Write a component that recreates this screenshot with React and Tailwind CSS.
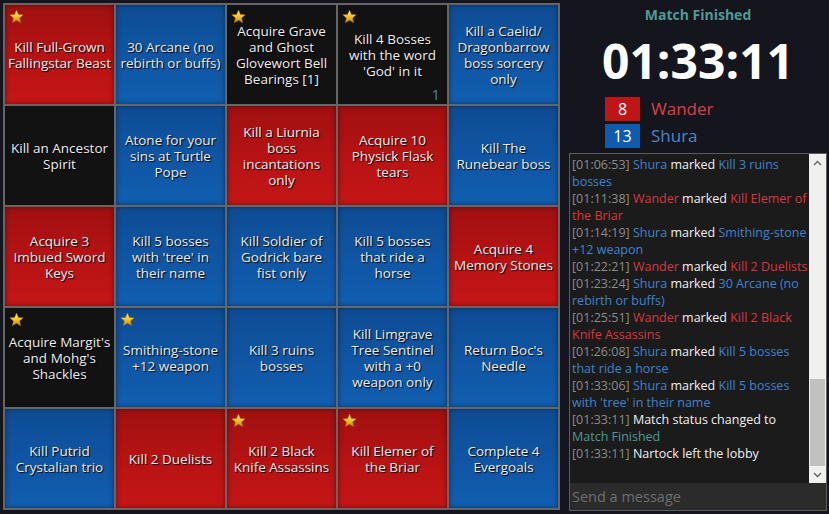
import React from "react";

const cells = [
  { c: "r", s: true, t: ["Kill Full-Grown", "Fallingstar Beast"] },
  { c: "b", t: ["30 Arcane (no", "rebirth or buffs)"] },
  { c: "k", s: true, t: ["Acquire Grave", "and Ghost", "Glovewort Bell", "Bearings [1]"] },
  { c: "k", s: true, t: ["Kill 4 Bosses", "with the word", "'God' in it"], n: "1" },
  { c: "b", t: ["Kill a Caelid/", "Dragonbarrow", "boss sorcery", "only"] },
  { c: "k", t: ["Kill an Ancestor", "Spirit"] },
  { c: "b", t: ["Atone for your", "sins at Turtle", "Pope"] },
  { c: "r", t: ["Kill a Liurnia", "boss", "incantations", "only"] },
  { c: "r", t: ["Acquire 10", "Physick Flask", "tears"] },
  { c: "b", t: ["Kill The", "Runebear boss"] },
  { c: "r", t: ["Acquire 3", "Imbued Sword", "Keys"] },
  { c: "b", t: ["Kill 5 bosses", "with 'tree' in", "their name"] },
  { c: "b", t: ["Kill Soldier of", "Godrick bare", "fist only"] },
  { c: "b", t: ["Kill 5 bosses", "that ride a", "horse"] },
  { c: "r", t: ["Acquire 4", "Memory Stones"] },
  { c: "k", s: true, t: ["Acquire Margit's", "and Mohg's", "Shackles"] },
  { c: "b", s: true, t: ["Smithing-stone", "+12 weapon"] },
  { c: "b", t: ["Kill 3 ruins", "bosses"] },
  { c: "b", t: ["Kill Limgrave", "Tree Sentinel", "with a +0", "weapon only"] },
  { c: "b", t: ["Return Boc's", "Needle"] },
  { c: "b", t: ["Kill Putrid", "Crystalian trio"] },
  { c: "r", t: ["Kill 2 Duelists"] },
  { c: "r", s: true, t: ["Kill 2 Black", "Knife Assassins"] },
  { c: "r", s: true, t: ["Kill Elemer of", "the Briar"] },
  { c: "b", t: ["Complete 4", "Evergoals"] },
];

const BG = {
  r: "bg-[linear-gradient(180deg,#a01010_0%,#b81314_55%,#c41617_100%)] shadow-[inset_0_0_5px_rgba(0,0,0,0.45)]",
  b: "bg-[linear-gradient(180deg,#0e4c94_0%,#1056a4_55%,#115eb0_100%)] shadow-[inset_0_0_5px_rgba(0,0,0,0.45)]",
  k: "bg-[#121212]",
};

function Star() {
  return (
    <svg className="absolute left-[4px] top-[4px]" width="15" height="15" viewBox="0 0 24 24">
      <defs>
        <linearGradient id="sg" x1="0" y1="0" x2="0" y2="1">
          <stop offset="0" stopColor="#fff3a0" />
          <stop offset="0.5" stopColor="#f5c52a" />
          <stop offset="1" stopColor="#d08a00" />
        </linearGradient>
      </defs>
      <polygon
        points="12,1.5 15.1,8.6 22.8,9.3 17,14.4 18.7,22 12,18 5.3,22 7,14.4 1.2,9.3 8.9,8.6"
        fill="url(#sg)"
        stroke="#9a6a00"
        strokeWidth="0.8"
      />
    </svg>
  );
}

function Cell({ d }) {
  return (
    <div className={`relative flex items-center justify-center text-center ${BG[d.c]}`}>
      {d.s && <Star />}
      <div className="text-[13.5px] leading-[16px] text-[#ececec] whitespace-nowrap [text-shadow:1px_1px_1px_#000]">
        {d.t.map((l, i) => (
          <div key={i}>{l}</div>
        ))}
      </div>
      {d.n && (
        <div className="absolute right-[7px] bottom-[1px] text-[15px] leading-[18px] text-[#4a7fc0]">{d.n}</div>
      )}
    </div>
  );
}

const T = "text-[#8c8c8c]";
const W = "text-[#f0f0f0]";
const RD = "text-[#d9373f]";
const BL = "text-[#3f83cc]";
const TL = "text-[#4f9a94]";

const msgs = [
  ["01:06:53", "Shura", "Kill 3 ruins bosses"],
  ["01:11:38", "Wander", "Kill Elemer of the Briar"],
  ["01:14:19", "Shura", "Smithing-stone +12 weapon"],
  ["01:22:21", "Wander", "Kill 2 Duelists"],
  ["01:23:24", "Shura", "30 Arcane (no rebirth or buffs)"],
  ["01:25:51", "Wander", "Kill 2 Black Knife Assassins"],
  ["01:26:08", "Shura", "Kill 5 bosses that ride a horse"],
  ["01:33:06", "Shura", "Kill 5 bosses with 'tree' in their name"],
];

export default function App() {
  return (
    <div className="flex w-[829px] h-[514px] bg-[#15151d] overflow-hidden font-['Open_Sans',sans-serif]">
      <div className="pt-[3px] pl-[3px]">
        <div className="grid grid-cols-[repeat(5,109px)] grid-rows-[repeat(5,99px)] gap-[2px] p-[2px] bg-[#666666]">
          {cells.map((d, i) => (
            <Cell key={i} d={d} />
          ))}
        </div>
      </div>
      <div className="flex flex-col flex-1 pl-[9px] pr-[2px]">
        <div className="text-center text-[14px] leading-[20px] font-bold text-[#4f9a94] pt-[5px]">Match Finished</div>
        <div className="text-center text-[48px] leading-[56px] font-bold text-white mt-[8px]">01:33:11</div>
        <div className="flex flex-col gap-[3px] pl-[36px] mt-[8px]">
          <div className="flex items-center">
            <div className="w-[35px] h-[24px] bg-[#c01517] text-white text-[16px] leading-[24px] text-center">8</div>
            <div className="ml-[11px] text-[17px] leading-[24px] text-[#d9404a]">Wander</div>
          </div>
          <div className="flex items-center">
            <div className="w-[35px] h-[24px] bg-[#0f5cad] text-white text-[16px] leading-[24px] text-center">13</div>
            <div className="ml-[11px] text-[17px] leading-[24px] text-[#4a86c8]">Shura</div>
          </div>
        </div>
        <div className="mt-[5px] h-[358px] border border-[#5c5c5c] bg-[#1b1b1c] flex flex-col">
          <div className="flex flex-1 min-h-0">
            <div className="flex-1 pl-[2px] pt-[2px] text-[12.5px] leading-[17px]">
              {msgs.map((m, i) => (
                <div key={i}>
                  <span className={T}>[{m[0]}]</span>{" "}
                  <span className={m[1] === "Shura" ? BL : RD}>{m[1]}</span>{" "}
                  <span className={W}>marked</span>{" "}
                  <span className={m[1] === "Shura" ? BL : RD}>{m[2]}</span>
                </div>
              ))}
              <div>
                <span className={T}>[01:33:11]</span> <span className={W}>Match status changed to</span>{" "}
                <span className={TL}>Match Finished</span>
              </div>
              <div>
                <span className={T}>[01:33:11]</span> <span className={W}>Nartock left the lobby</span>
              </div>
            </div>
            <div className="w-[17px] bg-[#f0f0f0] flex flex-col items-center">
              <div className="h-[17px] flex items-center justify-center">
                <svg width="9" height="6" viewBox="0 0 9 6">
                  <path d="M1 5 L4.5 1.5 L8 5" fill="none" stroke="#606060" strokeWidth="1.3" />
                </svg>
              </div>
              <div className="flex-1 w-full flex flex-col justify-end">
                <div className="h-[87px] mx-[1px] bg-[#c1c1c1]" />
              </div>
              <div className="h-[17px] flex items-center justify-center">
                <svg width="9" height="6" viewBox="0 0 9 6">
                  <path d="M1 1 L4.5 4.5 L8 1" fill="none" stroke="#606060" strokeWidth="1.3" />
                </svg>
              </div>
            </div>
          </div>
          <div className="h-[27px] bg-[#2b2b2b] pl-[2px] text-[14.5px] leading-[27px] text-[#6f6f6f]">Send a message</div>
        </div>
      </div>
    </div>
  );
}
